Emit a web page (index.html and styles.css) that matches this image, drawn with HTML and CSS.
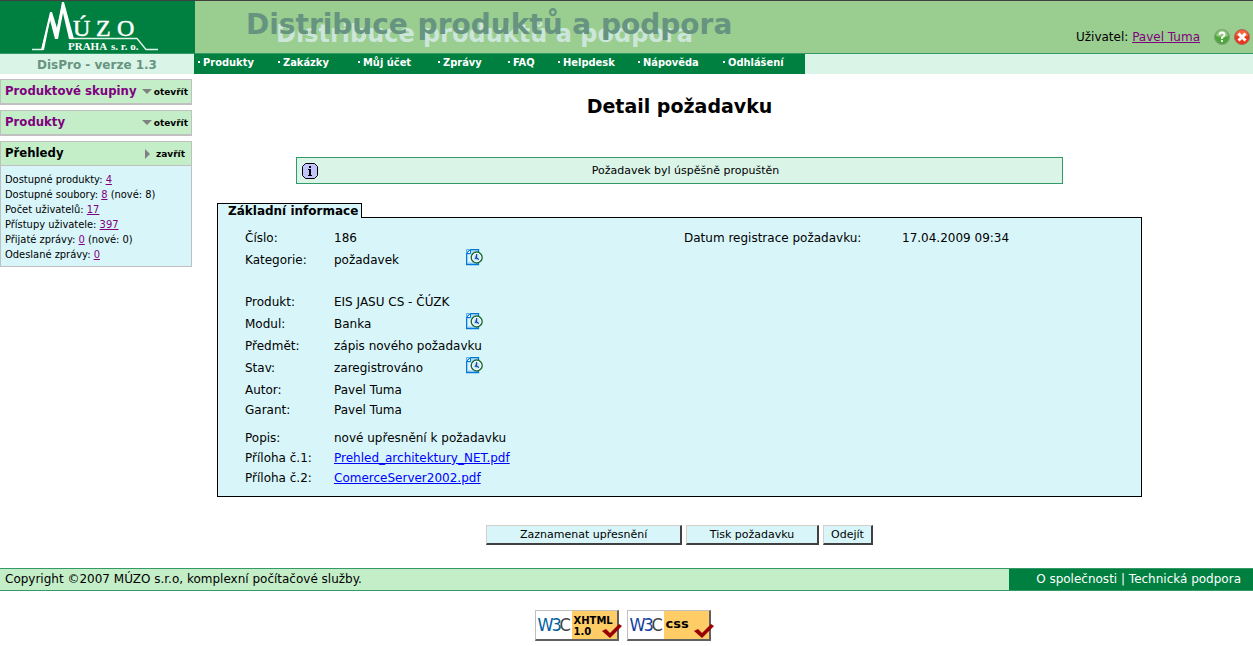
FILE: index.html
```html
<!DOCTYPE html>
<html lang="cs">
<head>
<meta charset="utf-8">
<title>DisPro - Detail požadavku</title>
<link rel="stylesheet" href="styles.css">
</head>
<body>
<svg class="defs" width="0" height="0" aria-hidden="true">
  <symbol id="history" viewBox="0 0 17 17">
    <path d="M4.500 .5H12.500V15.500H.5V4.500Z" fill="#b4dcfa"/>
    <path d="M2 6H8V13H2Z" fill="#e4f4ff"/>
    <path d="M12.500 3V.5H4.500L.5 4.500V15.500H12.500V14" fill="none" stroke="#0078d7" stroke-width="1.300"/>
    <path d="M4.500 .5V4.500H.5Z" fill="#fff" stroke="#0078d7"/>
    <path d="M.5 3V.5H3" fill="none" stroke="#58aef0"/>
    <circle cx="10.700" cy="8.500" r="5.400" fill="#cfeafc" stroke="#1d6a2d" stroke-width="1.500"/>
    <circle cx="10.700" cy="8.500" r="4.200" fill="none" stroke="#fff"/>
    <path d="M10.700 4.500V9L13.500 10.500L8.500 10Z" fill="#2a68b8"/>
    <path d="M10.700 5V9L13 10.500" fill="none" stroke="#003a8c"/>
  </symbol>
  <symbol id="check" viewBox="0 0 22 16">
    <path d="M1 8L5 6L9 10L18 1L21 3L9 15Z" fill="#900"/>
  </symbol>
</svg>

<header class="header">
  <div class="brand">
    <svg class="logo" viewBox="0 0 194 53" role="img" aria-label="MÚZO Praha s.r.o.">
      <path d="M32 48.500H42L51 13L56 34L63 3L71 37.500H137L146 48.500H158" fill="none" stroke="#dff5ea" stroke-width="1.400"/>
      <path d="M41 49L50 11H52L57 27L62 1H64L74 38H69L63 12L58 38H55L50 19L44 49Z" fill="#fff"/>
      <text class="logo-big" x="73" y="35">Ú</text>
      <text class="logo-big" x="96" y="35">Z</text>
      <text class="logo-big" x="117" y="35">O</text>
      <text class="logo-small" x="68" y="49">PRAHA</text>
      <text class="logo-small" x="111" y="49">s. r. o.</text>
    </svg>
  </div>
  <div class="banner">
    <div class="banner-title">
      <span class="banner-shadow" aria-hidden="true">Distribuce produktů a podpora</span>
      <span class="banner-text">Distribuce produktů a podpora</span>
    </div>
    <div class="user">
      <span>Uživatel: <a href="#">Pavel Tuma</a></span>
      <span class="user-icons">
        <svg width="16" height="16" viewBox="0 0 16 16" role="img" aria-label="Nápověda">
          <circle cx="8" cy="8" r="7.500" fill="#4da83c" stroke="#8b9c86"/>
          <path d="M2 7A6 6 0 0 1 14 7Q8 9 2 7Z" fill="#8cc878"/>
          <path d="M5.500 6Q5.500 3.500 8 3.500T10.500 6Q10.500 7.200 8 8.500V10M8 11V13" fill="none" stroke="#fff" stroke-width="1.800"/>
        </svg>
        <svg width="16" height="16" viewBox="0 0 16 16" role="img" aria-label="Odhlásit">
          <circle cx="8" cy="8" r="7.500" fill="#ee3418" stroke="#a86a60"/>
          <path d="M2 7A6 6 0 0 1 14 7Q8 9 2 7Z" fill="#f8683c"/>
          <path d="M4.500 4.500L11.500 11.500M11.500 4.500L4.500 11.500" stroke="#fff" stroke-width="3"/>
        </svg>
      </span>
    </div>
  </div>
</header>

<div class="subheader">
  <div class="version">DisPro - verze 1.3</div>
  <nav class="menu">
    <a href="#">Produkty</a>
    <a href="#">Zakázky</a>
    <a href="#">Můj účet</a>
    <a href="#" class="w70">Zprávy</a>
    <a href="#" class="w50">FAQ</a>
    <a href="#">Helpdesk</a>
    <a href="#" class="w85">Nápověda</a>
    <a href="#" class="w85">Odhlášení</a>
  </nav>
</div>

<div class="layout">
  <aside class="sidebar">
    <section class="panel">
      <div class="panel-head">
        <h2><a href="#">Produktové skupiny</a></h2>
        <button type="button" class="toggle"><span class="arrow-down"></span>otevřít</button>
      </div>
    </section>
    <section class="panel">
      <div class="panel-head">
        <h2><a href="#">Produkty</a></h2>
        <button type="button" class="toggle"><span class="arrow-down"></span>otevřít</button>
      </div>
    </section>
    <section class="panel panel-open">
      <div class="panel-head">
        <h2>Přehledy</h2>
        <button type="button" class="toggle toggle-close"><span class="arrow-right"></span>zavřít</button>
      </div>
      <ul class="stats">
        <li>Dostupné produkty: <a href="#">4</a></li>
        <li>Dostupné soubory: <a href="#">8</a> (nové: 8)</li>
        <li>Počet uživatelů: <a href="#">17</a></li>
        <li>Přístupy uživatele: <a href="#">397</a></li>
        <li>Přijaté zprávy: <a href="#">0</a> (nové: 0)</li>
        <li>Odeslané zprávy: <a href="#">0</a></li>
      </ul>
    </section>
  </aside>

  <main class="main">
    <h1>Detail požadavku</h1>
    <div class="notice" role="status">
      <svg width="16" height="16" viewBox="0 0 16 16" aria-hidden="true">
        <path d="M3.500 .5H12.500L15.500 3.500V12.500L12.500 15.500H3.500L.5 12.500V3.500Z" fill="#c4c4fc" stroke="#000"/>
        <path d="M7 3H9V5H7ZM6 6H9V12H10V13H6V12H7V7H6Z" fill="#000"/>
      </svg>
      <span>Požadavek byl úspěšně propuštěn</span>
    </div>

    <section class="detail">
      <h2 class="tab">Základní informace</h2>
      <dl class="fields">
        <div class="row">
          <dt>Číslo:</dt><dd>186</dd>
          <dt class="date-label">Datum registrace požadavku:</dt><dd>17.04.2009 09:34</dd>
        </div>
        <div class="row row-gap"><dt>Kategorie:</dt><dd>požadavek</dd><dd class="icon-cell"><svg class="history"><use href="#history"/></svg></dd></div>
        <div class="row"><dt>Produkt:</dt><dd class="wide">EIS JASU CS - ČÚZK</dd></div>
        <div class="row"><dt>Modul:</dt><dd>Banka</dd><dd class="icon-cell"><svg class="history"><use href="#history"/></svg></dd></div>
        <div class="row"><dt>Předmět:</dt><dd class="wide">zápis nového požadavku</dd></div>
        <div class="row"><dt>Stav:</dt><dd>zaregistrováno</dd><dd class="icon-cell"><svg class="history"><use href="#history"/></svg></dd></div>
        <div class="row row-author"><dt>Autor:</dt><dd>Pavel Tuma</dd></div>
        <div class="row row-short row-end"><dt>Garant:</dt><dd>Pavel Tuma</dd></div>
        <div class="row row-short"><dt>Popis:</dt><dd class="wide">nové upřesnění k požadavku</dd></div>
        <div class="row row-short"><dt>Příloha č.1:</dt><dd class="wide"><a href="#">Prehled_architektury_NET.pdf</a></dd></div>
        <div class="row row-short"><dt>Příloha č.2:</dt><dd class="wide"><a href="#">ComerceServer2002.pdf</a></dd></div>
      </dl>
    </section>

    <div class="actions">
      <button type="button" class="btn btn-note">Zaznamenat upřesnění</button>
      <button type="button" class="btn btn-print">Tisk požadavku</button>
      <button type="button" class="btn">Odejít</button>
    </div>
  </main>
</div>

<footer>
  <div class="footer">
    <div class="copyright">Copyright ©2007 MÚZO s.r.o, komplexní počítačové služby.</div>
    <div class="footer-links"><a href="#">O společnosti</a> | <a href="#">Technická podpora</a></div>
  </div>
  <div class="badges">
    <a class="badge" href="#">
      <span class="w3c"><b>W</b><b>3</b><i>C</i></span>
      <span class="badge-name">XHTML<br>1.0</span>
      <svg class="check"><use href="#check"/></svg>
    </a>
    <a class="badge badge-css" href="#">
      <span class="w3c"><b>W</b><b>3</b><i>C</i></span>
      <span class="badge-name">css</span>
      <svg class="check"><use href="#check"/></svg>
    </a>
  </div>
</footer>
</body>
</html>
```
FILE: styles.css
```css
* { box-sizing: border-box; }
body {
  margin: 0;
  background: #fff;
  color: #000;
  font: 12px/20px "DejaVu Sans", Verdana, sans-serif;
}
h1, h2, ul, dl, dd { margin: 0; padding: 0; }
a { color: #00f; }
.defs { position: absolute; }

.header {
  display: flex;
  height: 54px;
  border-top: 1px solid #404040;
  border-bottom: 1px solid #339966;
  background: #9acd90;
}
.brand { width: 195px; background: #008040; }
.logo { display: block; width: 194px; height: 53px; fill: #fff; }
.logo-big {
  font: 24px "Liberation Serif", serif;
  stroke: #fff;
  stroke-width: 0.5;
}
.logo-small { font: bold 11px "Liberation Serif", serif; }
.banner {
  flex: 1;
  display: flex;
  justify-content: space-between;
  padding-left: 51px;
}
.banner-title {
  position: relative;
  font-weight: bold;
  white-space: nowrap;
}
.banner-text {
  position: relative;
  color: #669480;
  font-size: 28px;
  line-height: 48px;
}
.banner-shadow {
  position: absolute;
  left: 30px;
  top: 17px;
  color: #cce6da;
  font-size: 24px;
  line-height: 32px;
}
.user {
  display: flex;
  align-items: center;
  gap: 14px;
  padding: 19px 3px 0 0;
}
.user a, .stats a { color: #800080; }
.user-icons { display: flex; gap: 4px; }

.subheader { display: flex; height: 20px; background: #daf4e8; }
.version {
  width: 194px;
  color: #669480;
  font-weight: bold;
  line-height: 22px;
  text-align: center;
}
.menu {
  display: flex;
  padding-right: 1px;
  background: #008040;
  font: bold 11px/18px "DejaVu Sans Condensed", "DejaVu Sans", Tahoma, sans-serif;
}
.menu a {
  display: flex;
  width: 80px;
  padding-left: 4px;
  color: #fff;
  text-decoration: none;
  white-space: nowrap;
}
.menu a::before {
  content: "";
  width: 2px;
  height: 2px;
  margin: 7px 3px 0 0;
  background: #fff;
}
.menu .w70 { width: 70px; }
.menu .w50 { width: 50px; }
.menu .w85 { width: 85px; }

.layout { display: flex; align-items: flex-start; }
.sidebar {
  display: flex;
  flex-direction: column;
  gap: 5px;
  width: 192px;
  padding-top: 5px;
  font: 11px/15px "DejaVu Sans Condensed", "DejaVu Sans", Tahoma, sans-serif;
}
.panel { border: 1px solid silver; border-bottom-width: 2px; background: #c4eec8; }
.panel-open { border-bottom-width: 1px; }
.panel-head {
  display: flex;
  justify-content: space-between;
  height: 23px;
  padding: 0 3px 0 4px;
}
.panel-head h2 { font-size: 13px; line-height: 22px; white-space: nowrap; }
.panel-head h2 a { color: #800080; text-decoration: none; }
.toggle {
  display: flex;
  align-items: center;
  gap: 2px;
  padding: 0;
  border: 0;
  background: none;
  color: #000;
  font: bold 9px/24px "DejaVu Sans", Verdana, sans-serif;
}
.toggle-close { gap: 6px; padding-right: 3px; }
.arrow-down { border: 5px solid transparent; border-top-color: #808080; border-bottom: 0; }
.arrow-right { border: 5px solid transparent; border-left-color: #808080; border-right: 0; }
.stats {
  padding: 6px 4px 4px;
  border-top: 1px solid silver;
  background: #d8f6fa;
  list-style: none;
}

.main { flex: 1; margin: 0 111px 0 25px; }
h1 { padding-top: 18px; font-size: 19px; line-height: 28px; text-align: center; }
.notice {
  display: flex;
  align-items: center;
  width: 83%;
  height: 27px;
  margin: 37px auto 19px;
  padding: 0 5px;
  border: 1px solid #339966;
  background: #daf4e8;
  font-size: 11px;
}
.notice span { flex: 1; padding-right: 4px; text-align: center; }
.tab {
  position: relative;
  width: 145px;
  height: 15px;
  padding-left: 10px;
  border: 1px solid #000;
  border-bottom: 0;
  background: #d8f6fa;
  font-size: 12px;
  line-height: 15px;
  white-space: nowrap;
}
.fields {
  margin-top: -1px;
  padding: 9px 27px 8px;
  border: 1px solid #000;
  background: #d8f6fa;
}
.row {
  display: grid;
  grid-template-columns: 89px 132px 218px 218px 1fr;
  align-items: center;
  height: 22px;
  white-space: nowrap;
}
.row-author { height: 21px; }
.row-short { height: 20px; }
.row-gap { margin-bottom: 20px; }
.row-end { margin-bottom: 8px; }
.date-label { grid-column: 4; }
.wide { grid-column: 2 / -1; }
.icon-cell { align-self: start; }
.history { display: block; width: 17px; height: 17px; }

.actions { display: flex; justify-content: center; gap: 4px; padding: 28px 0 23px; }
.btn {
  height: 20px;
  padding: 0 7px;
  border: 1px solid #d4d0c8;
  border-right: 2px solid #404040;
  border-bottom: 2px solid #404040;
  background: #d8f6fa;
  color: #000;
  font: 11px/16px "DejaVu Sans", Verdana, sans-serif;
  white-space: nowrap;
}
.btn-note { width: 196px; }
.btn-print { width: 133px; }

.footer {
  display: flex;
  height: 23px;
  border: 1px solid #339966;
  border-width: 1px 0;
  background: #c4eec8;
  line-height: 21px;
}
.copyright { flex: 1; padding-left: 5px; }
.footer-links { padding: 0 12px 0 27px; background: #008040; color: #fff; }
.footer-links a { color: #fff; text-decoration: none; }
.badges { display: flex; justify-content: center; gap: 8px; padding: 19px 8px 5px 0; }
.badge {
  position: relative;
  display: flex;
  width: 84px;
  height: 31px;
  border: 1px solid #c0c0c0;
  border-right: 2px solid #606060;
  border-bottom: 2px solid #606060;
  background: #fc6;
  color: #000;
  text-decoration: none;
}
.w3c {
  display: flex;
  width: 36px;
  padding-left: 2px;
  background: #fff;
  color: #0060a0;
  font: 18px/28px "DejaVu Sans Condensed", sans-serif;
  white-space: nowrap;
}
.w3c b { width: 8px; font-weight: normal; }
.w3c b:first-child { width: 14px; }
.w3c i { color: #444; font-style: normal; }
.badge-css .w3c { color: #1040a0; }
.badge-name { padding: 4px 0 0 2px; font: bold 10px/11px "DejaVu Sans", sans-serif; }
.badge-css .badge-name { font-size: 13px; line-height: 18px; }
.check { position: absolute; right: -6px; bottom: 0; width: 22px; height: 16px; }
```
